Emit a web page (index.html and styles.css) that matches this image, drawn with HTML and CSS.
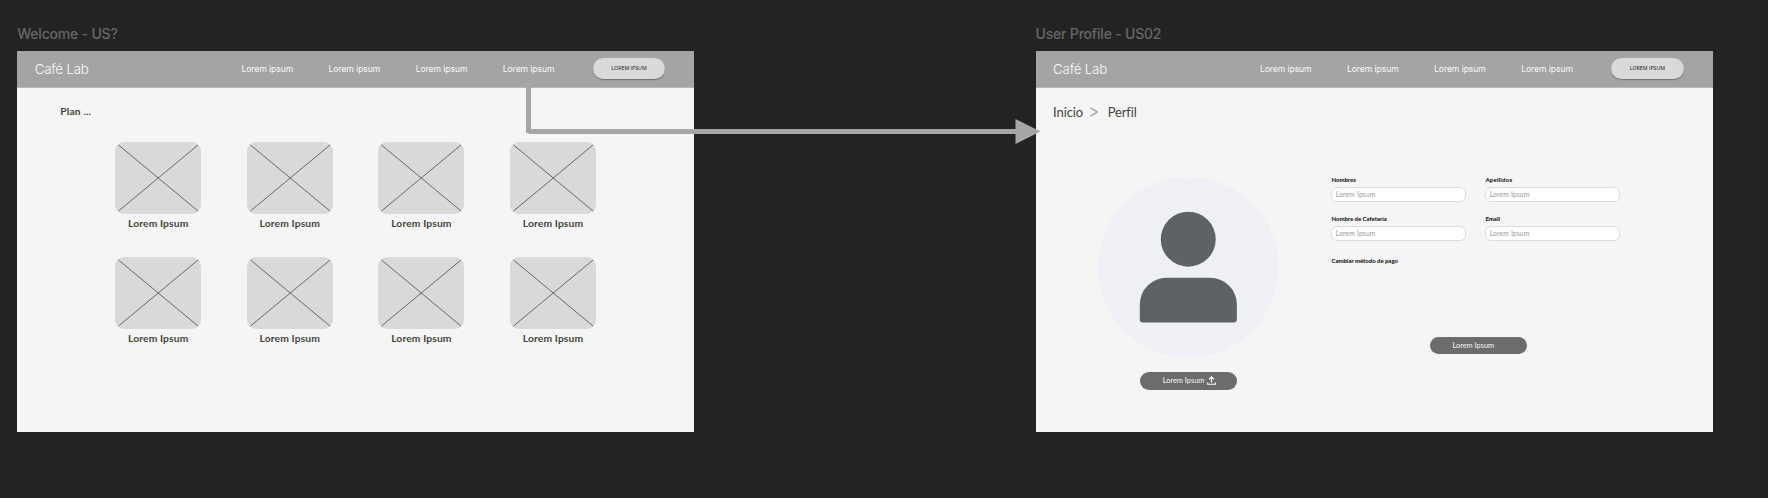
FILE: index.html
```html
<!DOCTYPE html>
<html lang="es">
<head>
<meta charset="utf-8">
<title>Café Lab wireframes</title>
<link rel="stylesheet" href="styles.css">
</head>
<body>
<main class="board">
  <section class="frame">
    <h2 class="frame-name">Welcome - US?</h2>
    <div class="screen">
      <header class="topbar">
        <span class="brand">Café Lab</span>
        <nav class="nav"><span>Lorem ipsum</span><span>Lorem ipsum</span><span>Lorem ipsum</span><span>Lorem ipsum</span></nav>
        <button class="cta">LOREM IPSUM</button>
      </header>
      <h3 class="plan">Plan ...</h3>
      <div class="cards">
        <figure class="card"><svg class="ph" viewBox="0 0 86 72"><path d="M3.5 3 83 69M83 3 3.5 69"/></svg><figcaption>Lorem Ipsum</figcaption></figure>
        <figure class="card"><svg class="ph" viewBox="0 0 86 72"><path d="M3.5 3 83 69M83 3 3.5 69"/></svg><figcaption>Lorem Ipsum</figcaption></figure>
        <figure class="card"><svg class="ph" viewBox="0 0 86 72"><path d="M3.5 3 83 69M83 3 3.5 69"/></svg><figcaption>Lorem Ipsum</figcaption></figure>
        <figure class="card"><svg class="ph" viewBox="0 0 86 72"><path d="M3.5 3 83 69M83 3 3.5 69"/></svg><figcaption>Lorem Ipsum</figcaption></figure>
        <figure class="card"><svg class="ph" viewBox="0 0 86 72"><path d="M3.5 3 83 69M83 3 3.5 69"/></svg><figcaption>Lorem Ipsum</figcaption></figure>
        <figure class="card"><svg class="ph" viewBox="0 0 86 72"><path d="M3.5 3 83 69M83 3 3.5 69"/></svg><figcaption>Lorem Ipsum</figcaption></figure>
        <figure class="card"><svg class="ph" viewBox="0 0 86 72"><path d="M3.5 3 83 69M83 3 3.5 69"/></svg><figcaption>Lorem Ipsum</figcaption></figure>
        <figure class="card"><svg class="ph" viewBox="0 0 86 72"><path d="M3.5 3 83 69M83 3 3.5 69"/></svg><figcaption>Lorem Ipsum</figcaption></figure>
      </div>
    </div>
  </section>

  <section class="frame">
    <h2 class="frame-name">User Profile - US02</h2>
    <div class="screen">
      <header class="topbar">
        <span class="brand">Café Lab</span>
        <nav class="nav"><span>Lorem ipsum</span><span>Lorem ipsum</span><span>Lorem ipsum</span><span>Lorem ipsum</span></nav>
        <button class="cta">LOREM IPSUM</button>
      </header>
      <div class="crumbs">
        <span>Inicio</span>
        <svg class="chev" viewBox="0 0 8 10"><path d="M.6.7 7.2 5 .6 9.3"/></svg>
        <span>Perfil</span>
      </div>
      <div class="profile">
        <div class="photo">
          <svg class="avatar" viewBox="0 0 180 180">
            <circle class="disc" cx="90" cy="90" r="90"/>
            <circle class="person" cx="90" cy="62" r="27.4"/>
            <path class="person" d="M41.7 128.3V127a27 26.5 0 0 1 27-26.500H111.5a27 26.5 0 0 1 27 26.5V142a3 3 0 0 1-3 3H44.7a3 3 0 0 1-3-3Z"/>
          </svg>
          <button class="pill">Lorem Ipsum
            <svg class="upload" viewBox="0 0 9 9"><path d="M4.500 6.500V1M2 3.300 4.500.8 7 3.300M.7 6.500V8.200H8.300V6.500"/></svg>
          </button>
        </div>
        <form class="form">
          <label class="field"><span>Nombres</span><input placeholder="Lorem Ipsum"></label>
          <label class="field"><span class="wide">Apellidos</span><input placeholder="Lorem Ipsum"></label>
          <label class="field"><span>Nombre de Cafetería</span><input placeholder="Lorem Ipsum"></label>
          <label class="field"><span>Email</span><input placeholder="Lorem Ipsum"></label>
          <p class="payment">Cambiar método de pago</p>
          <button class="pill save" type="button">Lorem Ipsum</button>
        </form>
      </div>
    </div>
  </section>
</main>
<svg class="connector" viewBox="0 0 516 70"><path d="M0 0H5V53H489.500V43L514.500 55.500 489.500 68V58H2.500V57H0Z"/></svg>
</body>
</html>
```

FILE: styles.css
```css
* { box-sizing: border-box; }
body {
  margin: 0;
  height: 498px;
  overflow: hidden;
  background: #232323;
  font-family: Lato, "Noto Sans", sans-serif;
}
button { border: 0; padding: 0; font-family: inherit; }
.board { display: flex; gap: 341.4px; padding: 23.5px 0 0 17.2px; }
.frame { flex: none; width: 677px; }
.frame-name {
  margin: 0;
  height: 27px;
  font: 500 14px/20px Inter, sans-serif;
  letter-spacing: -.2px;
  color: #676767;
  white-space: nowrap;
}
.screen { height: 381px; background: #f5f5f5; }
.topbar {
  display: flex;
  align-items: center;
  height: 37.5px;
  padding-left: 17.5px;
  background: #a4a4a4;
  border-bottom: 1px solid #b9b9b9;
  font-family: Inter, sans-serif;
  color: #fafafa;
}
.brand { width: 206.8px; font-size: 13.3px; font-weight: 300; letter-spacing: -.2px; }
.nav { display: flex; font-size: 8.6px; font-weight: 400; letter-spacing: -.08px; }
.nav span { width: 87.1px; white-space: nowrap; }
.cta {
  width: 72.5px;
  height: 21px;
  margin: -1px 0 0 2.9px;
  border-radius: 11px;
  background: #d9d9d9;
  box-shadow: 0 1px 1px rgba(0,0,0,.3);
  font: 400 5.300px/20px "Open Sans", sans-serif;
  color: #111;
}
.plan {
  margin: 16px 0 0 43px;
  font-size: 10.300px;
  letter-spacing: .15px;
  line-height: 14px;
  font-weight: 700;
  color: #44443a;
}
.cards {
  display: grid;
  grid-template-columns: repeat(4, 86px);
  column-gap: 45.600px;
  row-gap: 25.200px;
  margin: 24px 0 0 98px;
}
.card { margin: 0; height: 90px; text-align: center; }
.ph {
  display: block;
  width: 86px;
  height: 72px;
  border-radius: 9px;
  background: #d9d9d9;
  fill: none;
  stroke: #444;
  stroke-width: .75;
}
.card figcaption {
  padding-top: 2px;
  font-size: 10.300px;
  letter-spacing: .12px;
  line-height: 14px;
  font-weight: 700;
  color: #44443a;
}
.crumbs {
  display: flex;
  align-items: center;
  height: 20px;
  margin: 14px 0 0 17.500px;
  font-size: 13px;
  letter-spacing: -.12px;
  color: #44443a;
}
.chev { width: 8px; height: 10px; margin: 0 9.200px 0 7.500px; fill: none; stroke: #999; stroke-width: 1.300; }
.profile { display: flex; padding: 54.500px 0 0 62.800px; }
.photo { display: flex; flex-direction: column; align-items: center; width: 180.500px; }
.avatar { width: 180.500px; height: 180.500px; }
.disc { fill: #eff0f5; }
.person { fill: #5e6264; }
.pill {
  display: flex;
  align-items: center;
  width: 96.500px;
  height: 17.500px;
  padding-left: 22.300px;
  margin-top: 15px;
  border-radius: 9px;
  background: #6c6c6c;
  font-size: 7.400px;
  color: #f5f5f5;
  white-space: nowrap;
}
.upload { width: 9px; height: 9px; margin-left: 2.500px; fill: none; stroke: #fff; stroke-width: 1.100; }
.form {
  display: grid;
  grid-template-columns: 134.300px 134.300px;
  grid-template-rows: 39px 39px 12px;
  column-gap: 19.700px;
  align-content: start;
  margin: -.6px 0 0 52.600px;
}
.field { display: block; font-size: 6px; font-weight: 900; line-height: 8px; color: #222; }
.field span { display: block; height: 11.200px; letter-spacing: -.03px; }
.field .wide { letter-spacing: .2px; }
.field input {
  display: block;
  width: 100%;
  height: 14.600px;
  padding: 0 0 0 3.300px;
  border: .8px solid #dcdcdc;
  border-radius: 6px;
  background: #fff;
  font: 400 6.800px/12px Lato, sans-serif;
  letter-spacing: .13px;
}
.field input::placeholder { color: #999; opacity: 1; }
.payment { grid-column: 1 / 3; margin: 3px 0 0; font-size: 6px; line-height: 8px; font-weight: 900; letter-spacing: -.03px; color: #222; white-space: nowrap; }
.save { grid-column: 1 / 3; margin: 70.800px 0 0 98.700px; }
.connector { position: absolute; left: 526px; top: 76px; width: 516px; height: 70px; fill: #a6a6a9; }
```
